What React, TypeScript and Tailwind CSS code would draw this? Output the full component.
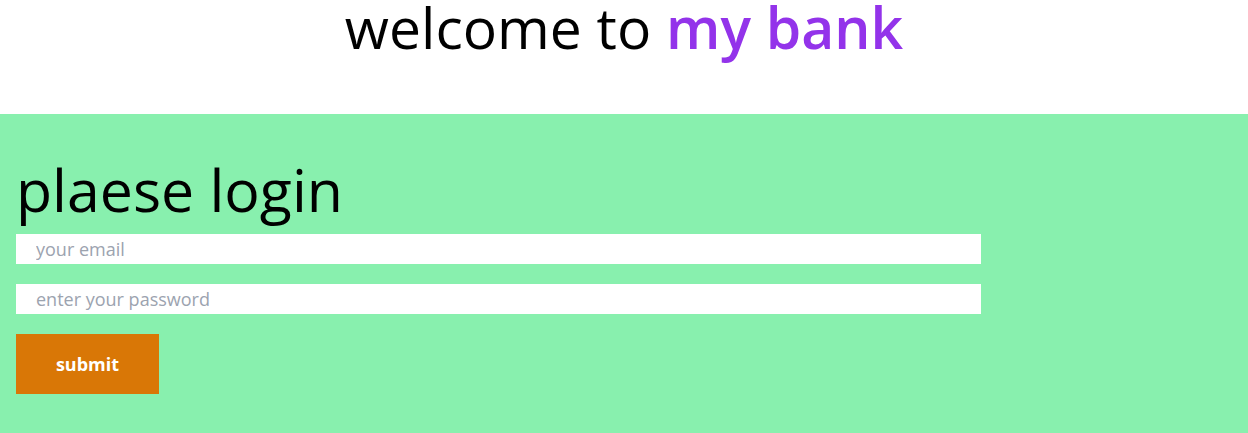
import React from 'react';

const App: React.FC = () => {
  return (
    <div className="min-h-[433px] bg-white font-['Open_Sans',sans-serif]">
      <div className="h-[114px] text-center">
        <h1 className="text-[57px] leading-[54px] text-black">
          welcome to <span className="font-semibold text-[#9333ea]">my bank</span>
        </h1>
      </div>

      <div className="bg-[#88f0ae] px-4 pt-[43px] pb-[39px]">
        <h2 className="mb-[13px] text-[59px] leading-[64px] text-black">plaese login</h2>
        <form className="flex flex-col gap-5" onSubmit={(e) => e.preventDefault()}>
          <input
            type="email"
            placeholder="your email"
            className="h-[30px] w-[965px] bg-white pl-5 text-lg text-black outline-none placeholder:text-[#9ca3af]"
          />
          <input
            type="password"
            placeholder="enter your password"
            className="h-[30px] w-[965px] bg-white pl-5 text-lg text-black outline-none placeholder:text-[#9ca3af]"
          />
          <button
            type="submit"
            className="h-[60px] w-[143px] bg-[#d97706] text-lg font-bold text-white"
          >
            submit
          </button>
        </form>
      </div>
    </div>
  );
};

export default App;
